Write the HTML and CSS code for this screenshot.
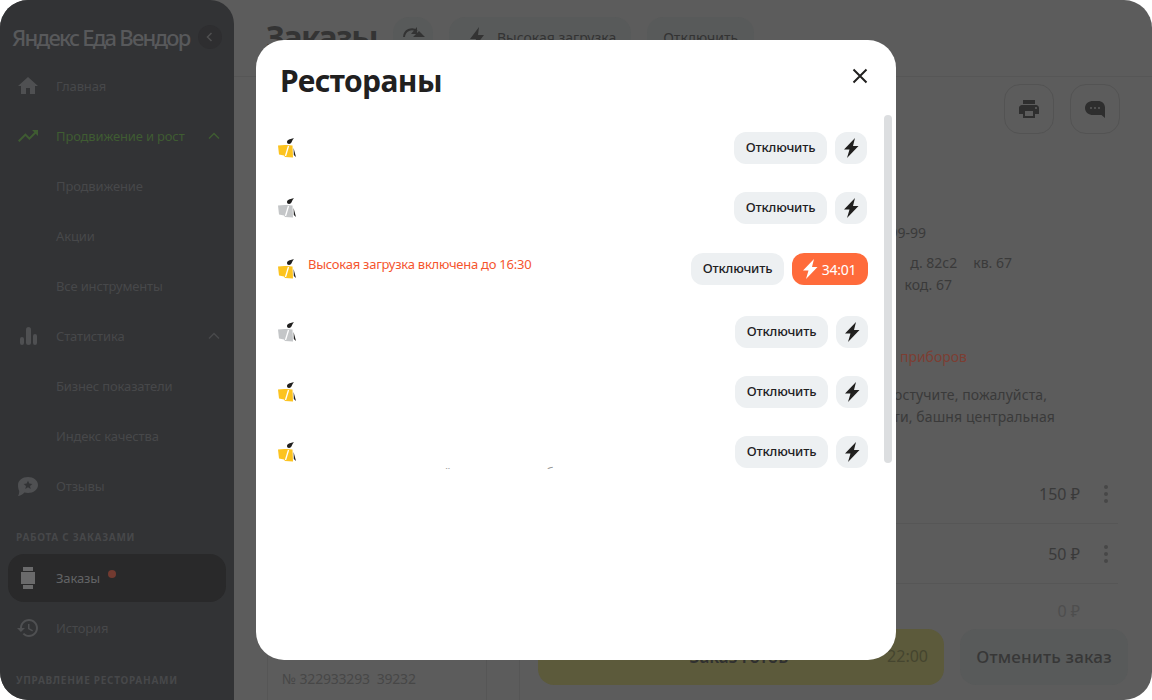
FILE: index.html
```html
<!DOCTYPE html>
<html lang="ru">
<head>
  <meta charset="UTF-8" />
  <meta name="viewport" content="width=device-width, initial-scale=1.0"/>
  <title>Яндекс Еда Вендор</title>
  <link rel="stylesheet" href="styles.css">
</head>
<body>
  <!-- Иконки, которые повторяются в списке ресторанов -->
  <svg class="sprite">
    <symbol id="courier" viewBox="0 0 20 20">
      <path fill="currentColor" d="M0 7.500L6.500 7l2.500 0L14.500 7.500 15 19.500 7 19l-1-1.500-5-1z"/>
      <path d="M10.500 8L7.500 18" stroke="#fff" stroke-width="1.300"/>
      <path d="M9 4c0-1.500 2-3 7-3.700-.9.7-1.400 1.500-1.900 2.600C13.500 4.500 12.400 6 11 6 9.700 6 9 5.200 9 4z" fill="#21201f"/>
      <path d="M15.600 10l2.400 9-2.200-2z" fill="#21201f"/>
    </symbol>
    <symbol id="bolt" viewBox="0 0 24 24">
      <path fill="currentColor" d="M16 2 L5 13.500 H10.500 L8 22 L19.500 10 H14 Z"/>
    </symbol>
  </svg>

  <div class="app">

    <!-- Боковое меню -->
    <aside class="sidebar">
      <div class="logo">
        <span class="logo-text">Яндекс Еда Вендор</span>
        <span class="collapse">
          <svg width="12" height="12" viewBox="0 0 12 12"><path d="M7.5 2 L3.5 6 L7.5 10" fill="none" stroke="#4f4f50" stroke-width="1.5"/></svg>
        </span>
      </div>
      <a class="nav-item">
        <svg class="nav-icon" viewBox="0 0 24 24"><path d="M10 20v-6h4v6h5v-8h3L12 3 2 12h3v8z"/></svg>
        <span>Главная</span>
      </a>
      <a class="nav-item nav-green">
        <svg class="nav-icon" viewBox="0 0 24 24"><path d="M16 6l2.29 2.29-4.88 4.88-4-4L2 16.59 3.41 18l6-6 4 4 6.3-6.29L22 12V6z"/></svg>
        <span>Продвижение и рост</span>
        <svg class="chevron" viewBox="0 0 12 12"><path d="M1 8.5 L6 3.5 L11 8.5"/></svg>
      </a>
      <a class="nav-item nav-sub"><span>Продвижение</span></a>
      <a class="nav-item nav-sub"><span>Акции</span></a>
      <a class="nav-item nav-sub"><span>Все инструменты</span></a>
      <a class="nav-item">
        <svg class="nav-icon" viewBox="0 0 24 24"><rect x="4" y="13" width="4" height="8" rx="2"/><rect x="10" y="3" width="5" height="18" rx="2.5"/><rect x="17" y="10" width="4" height="11" rx="2"/></svg>
        <span>Статистика</span>
        <svg class="chevron chevron-grey" viewBox="0 0 12 12"><path d="M1 8.5 L6 3.5 L11 8.5"/></svg>
      </a>
      <a class="nav-item nav-sub"><span>Бизнес показатели</span></a>
      <a class="nav-item nav-sub"><span>Индекс качества</span></a>
      <a class="nav-item">
        <svg class="nav-icon" viewBox="0 0 24 24"><path d="M12 3c5.5 0 10 3.4 10 8s-4.500 8-10 8c-1.300 0-2.500-.2-3.600-.5C6.500 21 4 21.800 2 22c.8-1.200 1.200-2.800 1.200-5C2.400 15.500 2 13.300 2 11c0-4.600 4.500-8 10-8z"/><path fill="#323335" d="M12 6.800l1.300 2.800 3 .3-2.300 2 .7 3-2.700-1.600-2.700 1.600.7-3-2.300-2 3-.3z"/></svg>
        <span>Отзывы</span>
      </a>
      <div class="nav-section nav-section-first">Работа с заказами</div>
      <a class="nav-item nav-active">
        <svg class="nav-icon" viewBox="0 0 24 24"><rect x="7" y="1" width="10" height="4"/><rect x="5" y="6" width="14" height="12"/><rect x="7" y="19" width="10" height="4"/></svg>
        <span>Заказы</span>
        <i class="nav-dot"></i>
      </a>
      <a class="nav-item nav-history">
        <svg class="nav-icon" viewBox="0 0 24 24"><path d="M13 3c-4.970 0-9 4.030-9 9H1l3.890 3.890.07.14L9 12H6c0-3.870 3.130-7 7-7s7 3.130 7 7-3.130 7-7 7c-1.930 0-3.680-.79-4.940-2.060l-1.420 1.420C8.270 19.990 10.510 21 13 21c4.970 0 9-4.030 9-9s-4.030-9-9-9zm-1 5v5l4.280 2.540.72-1.210-3.500-2.080V8H12z"/></svg>
        <span>История</span>
      </a>
      <div class="nav-section">Управление ресторанами</div>
    </aside>

    <!-- Основная часть, лежит под модальным окном -->
    <main class="main">
      <header class="main-header">
        <h1 class="main-title">Заказы</h1>
        <button class="head-btn head-round">
          <svg width="24" height="24" viewBox="0 0 24 24"><path d="M3 12a8 8 0 0 1 13-6" fill="none" stroke="#333" stroke-width="2"/><path d="M16 2v7h-6z M12 12 l6-6 6 6z" fill="#333"/></svg>
        </button>
        <button class="head-btn head-load">
          <svg width="24" height="24" viewBox="0 0 24 24"><path d="M14 2 L5 14 H11 L9 23 L19 10 H13 Z" fill="#333"/></svg>
          Высокая загрузка
        </button>
        <button class="head-btn head-off">Отключить</button>
      </header>

      <div class="main-body">
        <section class="orders-col">
          <p class="order-num">№ 322933293&nbsp;&nbsp;39232</p>
        </section>

        <section class="detail-col">
          <div class="detail-tools">
            <button class="tool-btn">
              <svg width="24" height="24" viewBox="0 0 24 24"><path d="M19 8H5c-1.660 0-3 1.340-3 3v6h4v4h12v-4h4v-6c0-1.660-1.340-3-3-3zm-3 11H8v-5h8v5zm3-7c-.55 0-1-.45-1-1s.45-1 1-1 1 .45 1 1-.45 1-1 1zm-1-9H6v4h12V3z" fill="#2e2e2e"/></svg>
            </button>
            <button class="tool-btn">
              <svg width="24" height="24" viewBox="0 0 24 24"><path d="M10 4h5c3.900 0 7 2.700 7 6.500v10.500l-3.500-3H10c-4 0-8-2.600-8-7s4-7 8-7z" fill="#2e2e2e"/><circle cx="8" cy="11" r="1" fill="#5c5c5c"/><circle cx="12" cy="11" r="1" fill="#5c5c5c"/><circle cx="16" cy="11" r="1" fill="#5c5c5c"/></svg>
            </button>
          </div>

          <div class="detail-line detail-phone">+7 999 999-99-99</div>
          <div class="detail-line detail-address">
            <span class="addr-street">ул. Садовая</span><span class="addr-house">д. 82с2</span><span>кв. 67</span>
          </div>
          <div class="detail-line detail-code">этаж 5&nbsp;&nbsp;&nbsp;код. 67</div>
          <div class="detail-line detail-red">Без приборов</div>
          <div class="detail-line detail-note detail-note-first">Когда приедете, постучите, пожалуйста,</div>
          <div class="detail-line detail-note detail-note-last">Москва-Сити, башня центральная</div>

          <div class="price-row price-first">
            <span>150 ₽</span>
            <svg class="more" viewBox="0 0 6 20"><circle cx="3" cy="3" r="2"/><circle cx="3" cy="10" r="2"/><circle cx="3" cy="17" r="2"/></svg>
          </div>
          <div class="price-row">
            <span>50 ₽</span>
            <svg class="more" viewBox="0 0 6 20"><circle cx="3" cy="3" r="2"/><circle cx="3" cy="10" r="2"/><circle cx="3" cy="17" r="2"/></svg>
          </div>
          <div class="price-row price-free"><span>0 ₽</span></div>

          <div class="detail-footer">
            <button class="btn-ready"><span class="ready-label">Заказ готов</span><span class="ready-time">22:00</span></button>
            <button class="btn-cancel">Отменить заказ</button>
          </div>
        </section>
      </div>
    </main>

    <!-- Модальное окно -->
    <div class="modal">
      <div class="modal-head">
        <h2 class="modal-title">Рестораны</h2>
        <button class="modal-close">
          <svg width="16" height="16" viewBox="0 0 16 16"><path d="M1.500 1.500 L14.500 14.500 M14.500 1.500 L1.500 14.500" stroke="#21201f" stroke-width="2" fill="none"/></svg>
        </button>
      </div>

      <ul class="rest-list">
        <li class="rest-row rest-row-left">
          <svg class="courier"><use href="#courier"/></svg>
          <div class="rest-info"></div>
          <button class="btn-off">Отключить</button>
          <button class="btn-bolt"><svg class="bolt"><use href="#bolt"/></svg></button>
        </li>
        <li class="rest-row rest-row-left rest-closed">
          <svg class="courier"><use href="#courier"/></svg>
          <div class="rest-info"></div>
          <button class="btn-off">Отключить</button>
          <button class="btn-bolt"><svg class="bolt"><use href="#bolt"/></svg></button>
        </li>
        <li class="rest-row rest-row-busy">
          <svg class="courier"><use href="#courier"/></svg>
          <div class="rest-info"><p class="rest-status">Высокая загрузка включена до 16:30</p></div>
          <button class="btn-off">Отключить</button>
          <button class="btn-timer"><svg class="bolt"><use href="#bolt"/></svg>34:01</button>
        </li>
        <li class="rest-row rest-closed">
          <svg class="courier"><use href="#courier"/></svg>
          <div class="rest-info"></div>
          <button class="btn-off">Отключить</button>
          <button class="btn-bolt"><svg class="bolt"><use href="#bolt"/></svg></button>
        </li>
        <li class="rest-row">
          <svg class="courier"><use href="#courier"/></svg>
          <div class="rest-info"></div>
          <button class="btn-off">Отключить</button>
          <button class="btn-bolt"><svg class="bolt"><use href="#bolt"/></svg></button>
        </li>
        <li class="rest-row">
          <svg class="courier"><use href="#courier"/></svg>
          <div class="rest-info"><p class="rest-cut">ресторан закрыт, приём заказов возобновится завтра</p></div>
          <button class="btn-off">Отключить</button>
          <button class="btn-bolt"><svg class="bolt"><use href="#bolt"/></svg></button>
        </li>
      </ul>

      <div class="rest-scroll"></div>
    </div>

  </div>
</body>
</html>
```

FILE: styles.css
```css
/* Общие стили */
* {
  box-sizing: border-box;
}

body {
  margin: 0;
  background-color: #fff;
  font-family: 'Noto Sans', sans-serif;
}

button {
  font-family: inherit;
  border: none;
  cursor: pointer;
}

.sprite {
  display: none;
}

/* Окно приложения */
.app {
  position: relative;
  display: flex;
  width: 1152px;
  height: 700px;
  overflow: hidden;
  border-radius: 28px;
  background-color: #5c5c5c;
}

/* Боковое меню */
.sidebar {
  flex: 0 0 234px;
  background-color: #323335;
  border-top-right-radius: 24px;
  color: #47484a;
  font-size: 13px;
  letter-spacing: -0.15px;
}

.logo {
  display: flex;
  align-items: center;
  justify-content: space-between;
  height: 61px;
  padding: 12px 12px 0 12px;
}

.logo-text {
  color: #58595b;
  font-size: 22px;
  font-weight: 500;
  letter-spacing: -1.75px;
  white-space: nowrap;
}

.collapse {
  display: flex;
  align-items: center;
  justify-content: center;
  width: 24px;
  height: 24px;
  border-radius: 50%;
  background-color: #2e2e30;
}

.nav-item {
  display: flex;
  align-items: center;
  height: 50px;
  padding-left: 56px;
  position: relative;
}

.nav-icon {
  position: absolute;
  left: 16px;
  top: 13px;
  width: 24px;
  height: 24px;
  fill: #4f5052;
}

.nav-green {
  color: #3f5c32;
}

.nav-green .nav-icon {
  fill: #3f5c32;
}

.chevron {
  position: absolute;
  right: 14px;
  top: 19px;
  width: 12px;
  height: 12px;
  fill: none;
  stroke: #3f5c32;
  stroke-width: 1.5;
}

.chevron-grey {
  stroke: #48494b;
}

.nav-section {
  height: 22px;
  padding: 6px 0 0 16px;
  color: #47484a;
  font-size: 10px;
  font-weight: 700;
  letter-spacing: 0.7px;
  line-height: 14px;
  text-transform: uppercase;
  white-space: nowrap;
}

.nav-section-first {
  height: 43px;
  padding-top: 19px;
}

.nav-active {
  height: 48px;
  margin: 0 8px;
  padding-left: 48px;
  border-radius: 16px;
  background-color: #29292a;
  color: #626365;
}

.nav-active .nav-icon {
  left: 8px;
  top: 12px;
  fill: #6a6a6b;
}

.nav-dot {
  width: 8px;
  height: 8px;
  margin: -8px 0 0 8px;
  border-radius: 50%;
  background-color: #723a30;
}

.nav-history {
  margin-top: 1px;
}

.nav-history + .nav-section {
  padding-top: 20px;
  height: 40px;
}

/* Основная часть */
.main {
  flex: 1;
  display: flex;
  flex-direction: column;
  min-width: 0;
}

.main-header {
  display: flex;
  align-items: flex-start;
  gap: 16px;
  height: 77px;
  padding: 17px 0 0 32px;
  border-bottom: 1px solid #565656;
}

.main-title {
  margin: 0;
  color: #343434;
  font-size: 32px;
  font-weight: 700;
  line-height: 40px;
  letter-spacing: -1.5px;
}

.head-btn {
  display: flex;
  align-items: center;
  gap: 8px;
  height: 40px;
  padding: 0 16px;
  border-radius: 16px;
  background-color: #585a5a;
  color: #333;
  font-size: 14px;
}

.head-round {
  width: 40px;
  padding: 0 8px;
}

.head-load {
  padding-right: 15px;
}

.main-body {
  flex: 1;
  display: flex;
  min-height: 0;
}

/* Список заказов слева */
.orders-col {
  flex: 0 0 220px;
  display: flex;
  flex-direction: column;
  justify-content: flex-end;
  margin-left: 33px;
  border-left: 1px solid #565656;
  border-right: 1px solid #565656;
}

.order-num {
  margin: 0;
  padding: 0 0 10px 14px;
  color: #474747;
  font-size: 14px;
  line-height: 22px;
  letter-spacing: -0.2px;
}

/* Детали заказа справа */
.detail-col {
  flex: 1;
  display: flex;
  flex-direction: column;
  min-width: 0;
  margin-left: 32px;
  border-left: 1px solid #565656;
  color: #3a3a3a;
  font-size: 14px;
}

.detail-tools {
  display: flex;
  justify-content: flex-end;
  gap: 16px;
  padding: 7px 32px 0 0;
}

.tool-btn {
  display: flex;
  align-items: center;
  justify-content: center;
  width: 50px;
  height: 50px;
  border: 1px solid #535353;
  border-radius: 16px;
  background: none;
}

/* Строки прижаты вправо: левая часть всё равно под модальным окном */
.detail-line {
  height: 22px;
  line-height: 22px;
  text-align: right;
  white-space: nowrap;
}

.detail-phone {
  margin-top: 88px;
  padding-right: 226px;
}

.detail-address {
  margin-top: 8px;
  padding-right: 140px;
}

.addr-street {
  margin-right: 16px;
}

.addr-house {
  margin-right: 16px;
}

.detail-code {
  padding-right: 200px;
}

.detail-red {
  margin-top: 50px;
  padding-right: 185px;
  color: #7c3e33;
}

.detail-note {
  padding-right: 105px;
  letter-spacing: 0.1px;
}

.detail-note-first {
  margin-top: 16px;
}

.detail-note-last {
  padding-right: 97px;
}

.price-row {
  display: flex;
  align-items: center;
  justify-content: flex-end;
  gap: 23px;
  flex: 0 0 60px;
  margin: 0 34px 0 0;
  padding-right: 9px;
  border-bottom: 1px solid #565656;
  font-size: 16px;
}

.price-first {
  margin-top: 36px;
}

.price-free {
  flex: 1;
  align-items: flex-start;
  padding: 16px 38px 0 0;
  border-bottom: none;
  color: #4e4e4e;
}

.more {
  width: 6px;
  height: 20px;
  fill: #474747;
}

.detail-footer {
  display: flex;
  gap: 16px;
  padding: 0 24px 15px 18px;
}

.btn-ready {
  display: flex;
  align-items: center;
  justify-content: flex-end;
  width: 406px;
  height: 56px;
  padding: 0 16px 2px;
  border-radius: 16px;
  background-color: #5c5a3b;
  color: #303030;
  font-size: 16px;
  font-weight: 600;
}

.ready-label {
  font-size: 17px;
}

.ready-time {
  margin-left: 99px;
  color: #45452f;
  font-weight: 400;
}

.btn-cancel {
  flex: 1;
  height: 56px;
  padding: 0 0 2px;
  border-radius: 16px;
  background-color: #585a5a;
  color: #373737;
  font-size: 17px;
  font-weight: 500;
  letter-spacing: 0.2px;
}

/* Модальное окно с ресторанами */
.modal {
  position: absolute;
  left: 256px;
  top: 40px;
  width: 640px;
  height: 620px;
  border-radius: 28px;
  background-color: #fff;
}

.modal-head {
  display: flex;
  justify-content: space-between;
  height: 78px;
  padding: 19px 28px 0 24px;
}

.modal-title {
  margin: 0;
  color: #21201f;
  font-size: 30px;
  font-weight: 700;
  line-height: 44px;
  letter-spacing: -0.6px;
}

.modal-close {
  width: 16px;
  height: 16px;
  margin-top: 9px;
  padding: 0;
  background: none;
}

.rest-list {
  height: 351px;
  margin: 0;
  padding: 0 28px 0 22px;
  overflow: hidden;
  list-style: none;
}

.rest-row {
  display: flex;
  align-items: center;
  gap: 8px;
  padding: 14px 0;
}

/* Первые две строки стоят на пиксель левее */
.rest-row-left {
  padding-right: 1px;
}

.rest-row-busy {
  padding: 15px 0 17px;
}

.courier {
  flex: 0 0 20px;
  width: 20px;
  height: 20px;
  color: #fcc31f;
}

.rest-closed .courier {
  color: #c4c6c8;
}

.bolt {
  width: 24px;
  height: 24px;
  color: #21201f;
}

.btn-timer .bolt {
  color: #fff;
}

.rest-info {
  flex: 1;
  height: 32px;
  margin-left: 2px;
}

.rest-status {
  margin: 2px 0 0 0;
  color: #f5552e;
  font-size: 13px;
  line-height: 18px;
  letter-spacing: -0.25px;
}

/* Следующая строка обрезается низом списка */
.rest-cut {
  margin: 27px 0 0 0;
  color: #9a9a9a;
  font-size: 13px;
  line-height: 18px;
  white-space: nowrap;
}

.btn-off {
  width: 93px;
  height: 32px;
  padding: 0 0 2px;
  border-radius: 12px;
  background-color: #edf0f2;
  color: #21201f;
  font-size: 13px;
  font-weight: 500;
  letter-spacing: -0.2px;
}

.btn-bolt {
  display: flex;
  align-items: center;
  justify-content: center;
  width: 32px;
  height: 32px;
  padding: 0;
  border-radius: 12px;
  background-color: #edf0f2;
}

.btn-timer {
  display: flex;
  align-items: center;
  justify-content: center;
  width: 76px;
  height: 32px;
  padding: 0 6px 0 0;
  border-radius: 12px;
  background-color: #ff6b3b;
  color: #fff;
  font-size: 14px;
  letter-spacing: -0.3px;
}

.rest-scroll {
  position: absolute;
  left: 628px;
  top: 75px;
  width: 8px;
  height: 348px;
  border-radius: 4px;
  background-color: #dcdee0;
}
```
